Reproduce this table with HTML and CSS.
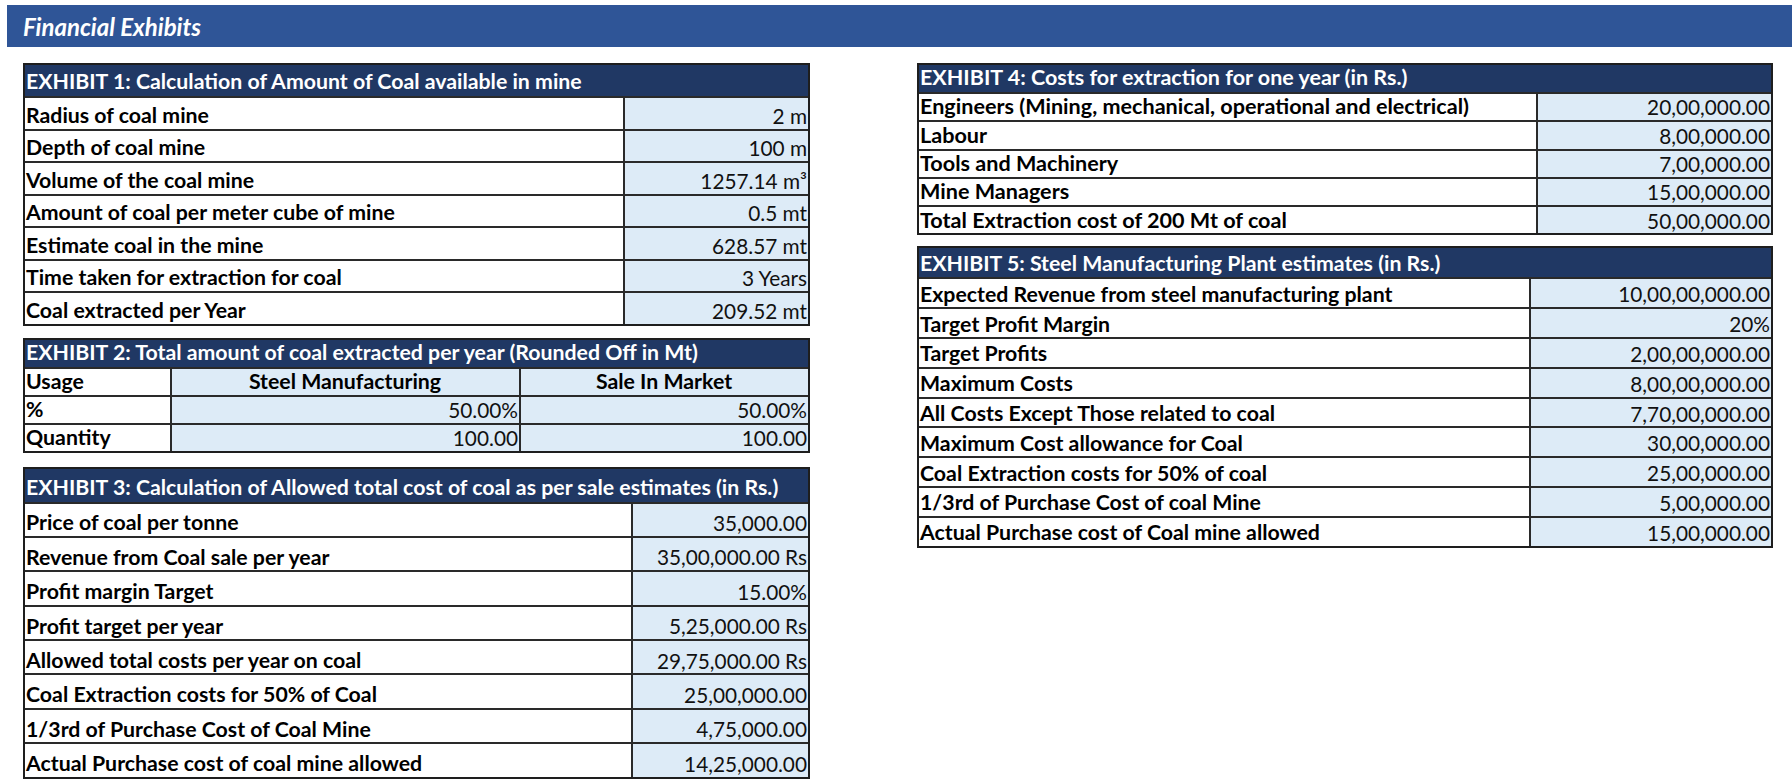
FILE: index.html
```html
<!DOCTYPE html>
<html lang="en">
<head>
<meta charset="utf-8">
<title>Financial Exhibits</title>
<link rel="stylesheet" href="styles.css">
</head>
<body>
<header class="topbar">Financial Exhibits</header>
<main class="content">
  <div class="col col-left">
    <section class="exhibit ex1">
      <div class="ex-head">EXHIBIT 1: Calculation of Amount of Coal available in mine</div>
      <div class="ex-row"><div class="lbl">Radius of coal mine</div><div class="val">2 m</div></div>
      <div class="ex-row"><div class="lbl">Depth of coal mine</div><div class="val">100 m</div></div>
      <div class="ex-row"><div class="lbl">Volume of the coal mine</div><div class="val">1257.14 m³</div></div>
      <div class="ex-row"><div class="lbl">Amount of coal per meter cube of mine</div><div class="val">0.5 mt</div></div>
      <div class="ex-row"><div class="lbl">Estimate coal in the mine</div><div class="val">628.57 mt</div></div>
      <div class="ex-row"><div class="lbl">Time taken for extraction for coal</div><div class="val">3 Years</div></div>
      <div class="ex-row"><div class="lbl">Coal extracted per Year</div><div class="val">209.52 mt</div></div>
    </section>

    <section class="exhibit ex2">
      <div class="ex-head">EXHIBIT 2: Total amount of coal extracted per year (Rounded Off in Mt)</div>
      <div class="ex-row"><div class="lbl">Usage</div><div class="val center">Steel Manufacturing</div><div class="val center">Sale In Market</div></div>
      <div class="ex-row"><div class="lbl">%</div><div class="val">50.00%</div><div class="val">50.00%</div></div>
      <div class="ex-row"><div class="lbl">Quantity</div><div class="val">100.00</div><div class="val">100.00</div></div>
    </section>

    <section class="exhibit ex3">
      <div class="ex-head">EXHIBIT 3: Calculation of Allowed total cost of coal as per sale estimates (in Rs.)</div>
      <div class="ex-row"><div class="lbl">Price of coal per tonne</div><div class="val">35,000.00</div></div>
      <div class="ex-row"><div class="lbl">Revenue from Coal sale per year</div><div class="val">35,00,000.00 Rs</div></div>
      <div class="ex-row"><div class="lbl">Profit margin Target</div><div class="val">15.00%</div></div>
      <div class="ex-row"><div class="lbl">Profit target per year</div><div class="val">5,25,000.00 Rs</div></div>
      <div class="ex-row"><div class="lbl">Allowed total costs per year on coal</div><div class="val">29,75,000.00 Rs</div></div>
      <div class="ex-row"><div class="lbl">Coal Extraction costs for 50% of Coal</div><div class="val">25,00,000.00</div></div>
      <div class="ex-row"><div class="lbl">1/3rd of Purchase Cost of Coal Mine</div><div class="val">4,75,000.00</div></div>
      <div class="ex-row"><div class="lbl">Actual Purchase cost of coal mine allowed</div><div class="val">14,25,000.00</div></div>
    </section>
  </div>

  <div class="col col-right">
    <section class="exhibit ex4">
      <div class="ex-head">EXHIBIT 4: Costs for extraction for one year (in Rs.)</div>
      <div class="ex-row"><div class="lbl">Engineers (Mining, mechanical, operational and electrical)</div><div class="val">20,00,000.00</div></div>
      <div class="ex-row"><div class="lbl">Labour</div><div class="val">8,00,000.00</div></div>
      <div class="ex-row"><div class="lbl">Tools and Machinery</div><div class="val">7,00,000.00</div></div>
      <div class="ex-row"><div class="lbl">Mine Managers</div><div class="val">15,00,000.00</div></div>
      <div class="ex-row"><div class="lbl">Total Extraction cost of 200 Mt of coal</div><div class="val">50,00,000.00</div></div>
    </section>

    <section class="exhibit ex5">
      <div class="ex-head">EXHIBIT 5: Steel Manufacturing Plant estimates (in Rs.)</div>
      <div class="ex-row"><div class="lbl">Expected Revenue from steel manufacturing plant</div><div class="val">10,00,00,000.00</div></div>
      <div class="ex-row"><div class="lbl">Target Profit Margin</div><div class="val">20%</div></div>
      <div class="ex-row"><div class="lbl">Target Profits</div><div class="val">2,00,00,000.00</div></div>
      <div class="ex-row"><div class="lbl">Maximum Costs</div><div class="val">8,00,00,000.00</div></div>
      <div class="ex-row"><div class="lbl">All Costs Except Those related to coal</div><div class="val">7,70,00,000.00</div></div>
      <div class="ex-row"><div class="lbl">Maximum Cost allowance for Coal</div><div class="val">30,00,000.00</div></div>
      <div class="ex-row"><div class="lbl">Coal Extraction costs for 50% of coal</div><div class="val">25,00,000.00</div></div>
      <div class="ex-row"><div class="lbl">1/3rd of Purchase Cost of coal Mine</div><div class="val">5,00,000.00</div></div>
      <div class="ex-row"><div class="lbl">Actual Purchase cost of Coal mine allowed</div><div class="val">15,00,000.00</div></div>
    </section>
  </div>
</main>
</body>
</html>
```

FILE: styles.css
```css
* { box-sizing: border-box; }

body {
  margin: 0;
  background: #ffffff;
  font-family: Lato, "Liberation Sans", sans-serif;
  color: #000;
}

.topbar {
  margin: 5px 0 0 7px;
  height: 42px;
  background: #2f5597;
  color: #ffffff;
  font-style: italic;
  font-weight: 700;
  font-size: 24px;
  display: flex;
  align-items: center;
  padding-left: 16px;
}

.content {
  display: flex;
  gap: 107px;
  margin-top: 16px;
  padding-left: 23px;
}

.col { display: flex; flex-direction: column; }
.col-left { width: 787px; }
.col-right { width: 856px; }

.exhibit {
  border: 2px solid #1e1e1e;
  font-size: 21.3px;
  line-height: 1.2;
}

.ex-head {
  background: #203864;
  color: #ffffff;
  font-weight: 700;
  display: flex;
  align-items: flex-end;
  padding: 0 0 1px 1px;
  height: var(--head-h);
  white-space: nowrap;
}

.ex4 .ex-head { font-size: 21.5px; }
.ex4 .lbl { font-size: 21.6px; }

.ex-row {
  display: grid;
  grid-template-columns: var(--lbl-w) 1fr;
  height: var(--row-h);
  border-top: 2px solid #2a2a2a;
}

.lbl, .val {
  display: flex;
  align-items: flex-end;
  white-space: nowrap;
  overflow: hidden;
}

.lbl {
  font-weight: 700;
  padding-left: 1px;
  background: #ffffff;
}

.val {
  justify-content: flex-end;
  font-weight: 400;
  font-size: 20.8px;
  color: #111;
  background: #ddebf7;
  border-left: 2px solid #2a2a2a;
  padding-right: 1px;
}

.val.center {
  justify-content: center;
  font-weight: 700;
  font-size: 21.3px;
  color: #000;
}

.ex1 { --head-h: 31px; --row-h: 32.5px; --lbl-w: 598px; }
.ex2 { --head-h: 27px; --row-h: 28px; --lbl-w: 145px; margin-top: 12px; }
.ex2 .ex-row { grid-template-columns: 145px 349px 1fr; }
.ex3 { --head-h: 33px; --row-h: 34.4px; --lbl-w: 606px; margin-top: 14px; }
.ex4 { --head-h: 27px; --row-h: 28.3px; --lbl-w: 617px; }
.ex5 { --head-h: 29px; --row-h: 29.8px; --lbl-w: 610px; margin-top: 11px; }
```
